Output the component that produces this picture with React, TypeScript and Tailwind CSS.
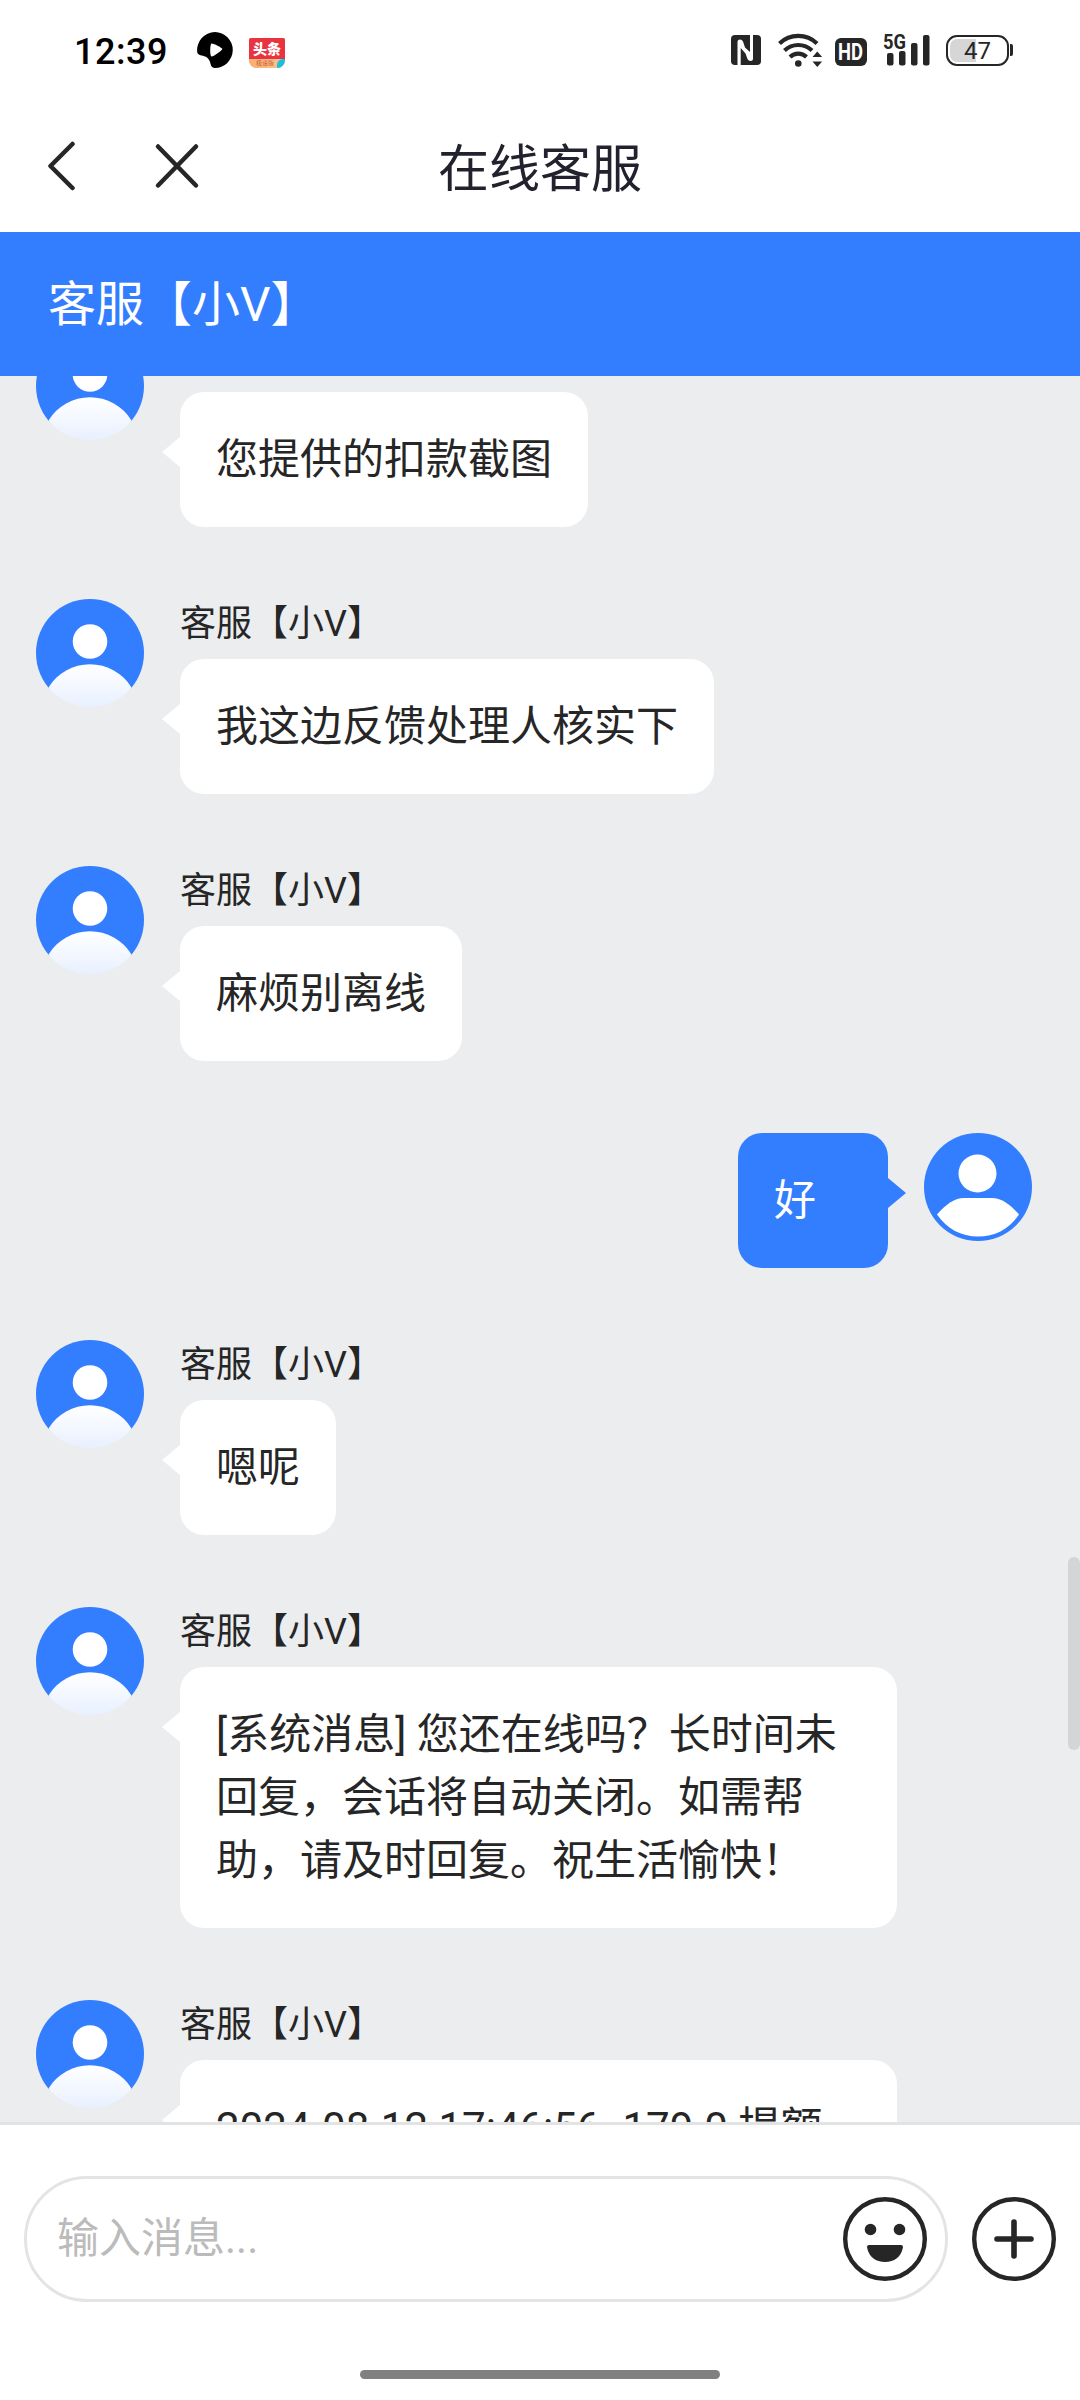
import React from 'react';

interface Message {
  id: number;
  from: 'agent' | 'me';
  lines: string[];
  wide?: boolean;
  hideName?: boolean;
}

const AGENT_NAME = '客服【小V】';

const messages: Message[] = [
  { id: 1, from: 'agent', hideName: true, lines: ['您提供的扣款截图'] },
  { id: 2, from: 'agent', lines: ['我这边反馈处理人核实下'] },
  { id: 3, from: 'agent', lines: ['麻烦别离线'] },
  { id: 4, from: 'me', lines: ['好'] },
  { id: 5, from: 'agent', lines: ['嗯呢'] },
  {
    id: 6,
    from: 'agent',
    wide: true,
    lines: [
      '[系统消息] 您还在线吗？长时间未',
      '回复，会话将自动关闭。如需帮',
      '助，请及时回复。祝生活愉快！',
    ],
  },
  { id: 7, from: 'agent', wide: true, lines: ['2024-08-12 17:46:56 -179.0 提额'] },
];

function StatusBar() {
  return (
    <div className="flex h-[100px] items-center pl-[74px] pr-[67px]">
      <span className="mt-[3px] w-[95px] text-[36px] font-medium leading-none tracking-[0.5px] text-black">12:39</span>
      <svg className="ml-[28px] shrink-0" width="36" height="36" viewBox="0 0 36 36">
        <path
          d="M18 0a18 18 0 1 1-.5 36c-2.500-.3-3.300-1.500-3.900-4-.7-3.500-2.300-6-5.300-7.400C5.500 23.400 1 23.500.3 20.500A18 18 0 0 1 18 0Z"
          fill="#000"
        />
        <path d="M14.500 11.500c1-.8 10 3.800 10.800 5.300.5 1.200-9 8.200-10.800 7.700-1.800-.8-1.600-12 0-13Z" fill="#fff" />
      </svg>
      <div className="mt-[5px] ml-[16px] flex h-[30px] w-[36px] shrink-0 flex-col overflow-hidden rounded-t-[2px] rounded-b-[8px] bg-[#f5a962]">
        <div className="flex h-[21px] items-center justify-center bg-[#ea3340] pt-[2px] text-[14px] font-black leading-none text-white">
          头条
        </div>
        <div className="flex h-[9px] items-center justify-between bg-linear-to-r from-[#f9b070] to-[#f9c48c] pl-[7px]">
          <span className="text-[6px] leading-none text-[#c8603a]">极速版</span>
          <span className="h-[9px] w-[8px] rounded-tl-[6px] bg-[#19bfe0]" />
        </div>
      </div>

      <div className="ml-auto flex items-center">
        {/* NFC */}
        <svg width="30" height="32" viewBox="0 0 30 32">
          <rect x="0" y="1" width="30" height="30" rx="4" fill="#262626" />
          <path
            d="M6.500 31V8Q6.500 5.500 9 5.500Q11 5.500 12 7.500L14 13.500L19 18V1H22V24.500Q22 27 19.500 27Q17.500 27 16.500 25L14.500 19.500L9.700 14V31Z"
            fill="#fff"
          />
        </svg>
        {/* Wi-Fi */}
        <svg className="ml-[17px]" width="45" height="36" viewBox="0 0 45 36">
          <g fill="none" stroke="#262626" strokeWidth="4.200">
            <path d="M1.500 11.500a27 27 0 0 1 37.500 0" />
            <path d="M6.500 18.500a20 20 0 0 1 27.500 0" />
            <path d="M12 25a12 12 0 0 1 16.500 0" />
          </g>
          <circle cx="20.300" cy="31.500" r="3.300" fill="#262626" />
          <path d="M34.500 25l4.800-5.500 4.800 5.500zM34.500 29.500l4.800 5.500 4.800-5.500z" fill="#262626" />
        </svg>
        <div className="mt-[3px] ml-[12px] flex h-[28px] w-[32px] items-center justify-center rounded-[6px] bg-[#262626] pt-[1px] text-[23px] font-bold leading-none text-white">
          <span className="scale-x-[0.8]">HD</span>
        </div>
        {/* Signal */}
        <svg className="ml-[16px]" width="48" height="42" viewBox="0 -4 48 42">
          <text x="0" y="15.500" fontFamily="Roboto" fontWeight="700" fontSize="21" textLength="23" lengthAdjust="spacingAndGlyphs" fill="#262626">
            5G
          </text>
          <g fill="#262626">
            <rect x="4" y="20" width="6.500" height="12.500" rx="2" />
            <rect x="16" y="18" width="6.500" height="14.500" rx="2" />
            <rect x="28" y="10" width="6.500" height="22.500" rx="2" />
            <rect x="40" y="2" width="6.500" height="30.500" rx="2" />
          </g>
        </svg>
        {/* Battery */}
        <div className="ml-[15px] flex items-center gap-[1px]">
          <div className="h-[31px] w-[63px] rounded-[11px] border-[2.500px] border-[#262626] p-[2px]">
            <div className="flex h-full items-center justify-center rounded-[7px] bg-[linear-gradient(to_right,#d6d6d6_47%,transparent_47%)] pt-[2px] text-[24px] leading-none text-[#262626]">
              47
            </div>
          </div>
          <div className="h-[12px] w-[3px] rounded-r-[2px] bg-[#262626]" />
        </div>
      </div>
    </div>
  );
}

function NavBar() {
  return (
    <div className="grid h-[132px] grid-cols-3 items-center">
      <div className="flex items-center pl-[46px]">
        <svg width="32" height="50" viewBox="0 0 32 50" fill="none" stroke="#262626" strokeWidth="4.500" strokeLinecap="round" strokeLinejoin="round">
          <path d="M26.500 3L4.500 25L26.500 47" />
        </svg>
        <svg className="ml-[76px]" width="46" height="46" viewBox="0 0 46 46" fill="none" stroke="#262626" strokeWidth="4.500" strokeLinecap="round">
          <path d="M4 3.500L42 42.500M42 3.500L4 42.500" />
        </svg>
      </div>
      <h1 className="whitespace-nowrap pt-[7px] text-center text-[51px] leading-none text-[#22222e]">在线客服</h1>
    </div>
  );
}

function AgentAvatar() {
  return (
    <svg className="shrink-0" width="108" height="108" viewBox="0 0 108 108">
      <defs>
        <clipPath id="agent-clip">
          <circle cx="54" cy="54" r="54" />
        </clipPath>
        <linearGradient id="agent-body" x1="0" y1="65" x2="0" y2="108" gradientUnits="userSpaceOnUse">
          <stop offset="0" stopColor="#ffffff" />
          <stop offset="1" stopColor="#e8f0ff" />
        </linearGradient>
      </defs>
      <g clipPath="url(#agent-clip)">
        {/* blue stops at the shoulders so the rim below them stays pale */}
        <rect width="108" height="89.500" fill="#337dff" />
        <circle cx="54" cy="42.500" r="17.300" fill="#fff" />
        <path d="M12.500 88.500A48.600 48.600 0 0 1 95.500 88.500L100 108H8Z" fill="url(#agent-body)" />
      </g>
    </svg>
  );
}

function MyAvatar() {
  return (
    <svg className="shrink-0" width="108" height="108" viewBox="0 0 108 108">
      <circle cx="54" cy="54" r="54" fill="#337dff" />
      <circle cx="53.500" cy="40.500" r="19" fill="#fff" />
      <path d="M13 81.500C22 71 31 65 40 65H68C77 65 86 71 95 81.500C85 96 71 103.500 54 103.500S23 96 13 81.500Z" fill="#fff" />
    </svg>
  );
}

function MessageRow({ message }: { message: Message }) {
  if (message.from === 'me') {
    return (
      <div className="flex items-start justify-end pr-[48px]">
        <div className="min-w-[150px] rounded-[24px] bg-[#337dff] p-[36px] text-[42px] leading-[63px] text-white">
          {message.lines[0]}
        </div>
        <svg className="mt-[45px] mr-[18px]" width="18" height="30" viewBox="0 0 18 30">
          <path d="M0 0L18 15L0 30Z" fill="#337dff" />
        </svg>
        <MyAvatar />
      </div>
    );
  }

  return (
    <div className="flex items-start pl-[36px]">
      <AgentAvatar />
      <svg className="mt-[105px] ml-[18px] shrink-0" width="18" height="30" viewBox="0 0 18 30">
        <path d="M18 0L0 15L18 30Z" fill="#fff" />
      </svg>
      <div>
        <div className="h-[60px] whitespace-nowrap text-[36px] leading-[51px] text-[#262626]">
          {!message.hideName && AGENT_NAME}
        </div>
        <div
          className={`w-fit rounded-[24px] bg-white p-[36px] text-[42px] leading-[63px] text-[#262626] ${
            message.wide ? 'min-w-[717px]' : ''
          }`}
        >
          {message.lines.map((line) => (
            <p key={line} className="whitespace-nowrap">
              {line}
            </p>
          ))}
        </div>
      </div>
    </div>
  );
}

function InputBar() {
  return (
    <div className="flex h-[278px] flex-col items-center justify-between border-t-[3px] border-[#e2e3e4] bg-white pt-[51px] pb-[21px]">
      <div className="flex w-full items-center px-[24px]">
        <div className="flex h-[126px] w-[924px] items-center justify-between rounded-full border-[3px] border-[#e4e4e4] pl-[30px] pr-[18px]">
          <span className="text-[42px] leading-none text-[#bbbbbb]">输入消息...</span>
          <svg width="84" height="84" viewBox="0 0 84 84">
            <circle cx="42" cy="42" r="39.800" fill="none" stroke="#262626" strokeWidth="4.400" />
            <circle cx="27.500" cy="32.500" r="5.800" fill="#262626" />
            <circle cx="56.500" cy="32.500" r="5.800" fill="#262626" />
            <path d="M26 48H58Q60 48 60 50C58.500 60 51 65 42 65S25.500 60 24 50Q24 48 26 48Z" fill="#262626" />
          </svg>
        </div>
        <svg className="ml-[24px]" width="84" height="84" viewBox="0 0 84 84" fill="none" stroke="#262626">
          <circle cx="42" cy="42" r="39.800" strokeWidth="4.400" />
          <path d="M25 42H59M42 25V59" strokeWidth="5.600" strokeLinecap="round" />
        </svg>
      </div>
      <div className="h-[9px] w-[360px] rounded-full bg-[#808080]" />
    </div>
  );
}

export default function App() {
  return (
    <div className="flex h-[2400px] w-[1080px] flex-col overflow-hidden bg-white font-['Roboto','Noto_Sans_CJK_SC',sans-serif]">
      <StatusBar />
      <NavBar />
      <div className="flex h-[144px] shrink-0 items-center bg-[#337dff] pt-[2px] pl-[48px] text-[48px] leading-none text-white">
        {AGENT_NAME}
      </div>

      <div className="relative h-[1746px] shrink-0 overflow-hidden bg-[#ebedef]">
        {/* list is scrolled, the first message sits partly above the edge */}
        <div className="-mt-[44px] flex flex-col gap-[72px]">
          {messages.map((message) => (
            <MessageRow key={message.id} message={message} />
          ))}
        </div>
        <div className="absolute top-[1181px] right-0 h-[193px] w-[12px] rounded-[6px] bg-[#d4d5d6]" />
      </div>

      <InputBar />
    </div>
  );
}
